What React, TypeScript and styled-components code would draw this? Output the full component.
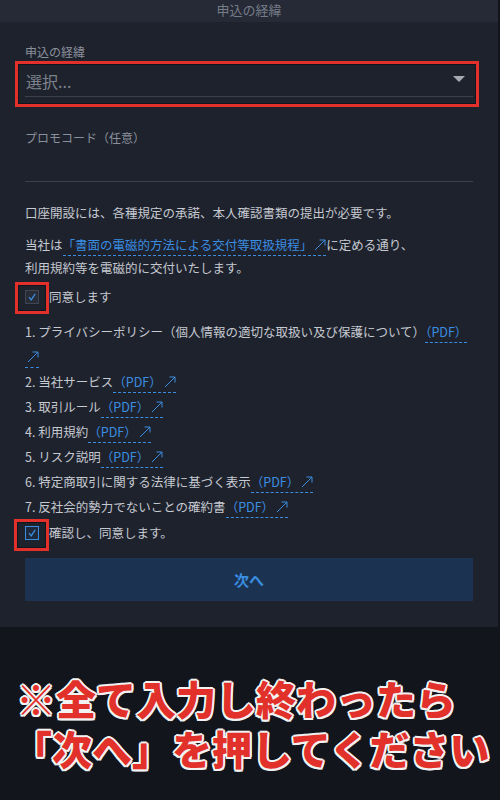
import styled, { createGlobalStyle } from 'styled-components';

const GlobalStyle = createGlobalStyle`
  body {
    margin: 0;
    background-color: #12151c;
    font-family: 'Noto Sans CJK JP', 'Noto Sans', sans-serif;
  }
`;

const documents = [
  'プライバシーポリシー（個人情報の適切な取扱い及び保護について）',
  '当社サービス',
  '取引ルール',
  '利用規約',
  'リスク説明',
  '特定商取引に関する法律に基づく表示',
  '反社会的勢力でないことの確約書',
];

function ArrowIcon() {
  return (
    <svg width="12" height="12" viewBox="0 0 12 12" fill="none">
      <path d="M1 11L11 1M5.5 1H11V6.5" stroke="currentColor" strokeWidth="1" />
    </svg>
  );
}

function CheckIcon() {
  return (
    <svg width="10" height="10" viewBox="0 0 10 10" fill="none">
      <path d="M2 5.2L4.2 7.8L8.2 1.8" stroke="#3a8de0" strokeWidth="1.3" />
    </svg>
  );
}

export default function App() {
  return (
    <>
      <GlobalStyle />
      <Card>
        <Header>申込の経緯</Header>
        <Body>
          <FieldLabel>申込の経緯</FieldLabel>
          <SelectField $mark="-5px -6px -11px -10px">
            <Placeholder>選択...</Placeholder>
            <Caret />
          </SelectField>

          <FieldLabel $top={33}>プロモコード（任意）</FieldLabel>
          <PromoInput />

          <Paragraph $top={19}>
            口座開設には、各種規定の承諾、本人確認書類の提出が必要です。
          </Paragraph>
          <Paragraph $top={9}>
            当社は
            <Link>
              「書面の電磁的方法による交付等取扱規程」
              <ArrowIcon />
            </Link>
            に定める通り、
            <br />
            利用規約等を電磁的に交付いたします。
          </Paragraph>

          <CheckRow $top={8}>
            <CheckWrap $mark="-8px -10px -10px -10px">
              <CheckBox>
                <CheckIcon />
              </CheckBox>
            </CheckWrap>
            同意します
          </CheckRow>

          <DocList>
            {documents.map((name, i) => (
              <DocItem key={i}>
                {i + 1}. {name}
                <Link>
                  （PDF）
                  <ArrowIcon />
                </Link>
              </DocItem>
            ))}
          </DocList>

          <CheckRow $top={4}>
            <CheckWrap $mark="-7px -10px -11px -11px">
              <CheckBox $active>
                <CheckIcon />
              </CheckBox>
            </CheckWrap>
            確認し、同意します。
          </CheckRow>

          <NextButton>次へ</NextButton>
        </Body>
      </Card>
      <Notice>
        <div>※全て入力し終わったら</div>
        <NoticeSecond>「次へ」を押してください</NoticeSecond>
      </Notice>
    </>
  );
}

const Card = styled.section`
  width: 498px;
  background-color: #1e222d;
  padding-bottom: 26px;
`;

const Header = styled.div`
  height: 22px;
  background-color: #252a36;
  color: #767c88;
  font-size: 13px;
  line-height: 20px;
  text-align: center;
`;

const Body = styled.div`
  padding: 0 25px;
  display: flex;
  flex-direction: column;
`;

const Marked = styled.div<{ $mark: string }>`
  position: relative;

  &::after {
    content: '';
    position: absolute;
    inset: ${({ $mark }) => $mark};
    border: 3px solid #e4302a;
    box-shadow: inset 0 0 0 1px #12151b;
    pointer-events: none;
  }
`;

const FieldLabel = styled.div<{ $top?: number }>`
  margin-top: ${({ $top }) => $top ?? 22}px;
  font-size: 12px;
  line-height: 16px;
  color: #8a909b;
`;

const SelectField = styled(Marked)`
  margin-top: 6px;
  height: 30px;
  display: flex;
  align-items: center;
  justify-content: space-between;
  border-bottom: 1px solid #3b404b;
`;

const Placeholder = styled.span`
  font-size: 16px;
  color: #7c828c;
  padding-left: 1px;
  margin-top: -1px;
`;

const Caret = styled.span`
  width: 0;
  height: 0;
  border-left: 6px solid transparent;
  border-right: 6px solid transparent;
  border-top: 6px solid #a4a9b2;
  margin-right: 8px;
  margin-top: -4px;
`;

const PromoInput = styled.div`
  height: 35px;
  border-bottom: 1px solid #3b404b;
`;

const Paragraph = styled.p<{ $top: number }>`
  margin: ${({ $top }) => $top}px 0 0;
  font-size: 12.5px;
  line-height: 23px;
  color: #c5c9d0;
`;

const Link = styled.span`
  color: #3a8de0;
  border-bottom: 1px dashed #3a8de0;
  padding-bottom: 1px;

  & svg {
    margin-left: 2px;
    vertical-align: -1px;
  }
`;

const CheckRow = styled.div<{ $top: number }>`
  margin-top: ${({ $top }) => $top}px;
  display: flex;
  align-items: center;
  gap: 10px;
  font-size: 12.5px;
  line-height: 20px;
  color: #c5c9d0;
`;

const CheckWrap = styled(Marked)`
  display: flex;
`;

const CheckBox = styled.span<{ $active?: boolean }>`
  width: 12px;
  height: 12px;
  border: 1px solid ${({ $active }) => ($active ? '#3a8de0' : '#3f4552')};
  background-color: ${({ $active }) => ($active ? '#1e2a3c' : '#272c37')};
  display: flex;
  align-items: center;
  justify-content: center;
`;

const DocList = styled.ol`
  list-style: none;
  margin: 12px 0 0;
  padding: 0;
`;

const DocItem = styled.li`
  font-size: 12.5px;
  line-height: 25px;
  color: #c5c9d0;
`;

const NextButton = styled.button`
  margin-top: 15px;
  height: 43px;
  border: none;
  background-color: #1b3350;
  color: #3a8de0;
  font-family: inherit;
  font-size: 15px;
  font-weight: bold;
`;

const Notice = styled.div`
  padding: 46px 0 0 16px;
  font-size: 40px;
  font-weight: 900;
  line-height: 50px;
  color: #e2302a;
  white-space: nowrap;
  text-shadow:
    2px 0 0 #f2f2f2, -2px 0 0 #f2f2f2, 0 2px 0 #f2f2f2, 0 -2px 0 #f2f2f2,
    1.5px 1.5px 0 #f2f2f2, -1.5px 1.5px 0 #f2f2f2, 1.5px -1.5px 0 #f2f2f2,
    -1.5px -1.5px 0 #f2f2f2;
`;

const NoticeSecond = styled.div`
  margin-left: -4px;
`;
